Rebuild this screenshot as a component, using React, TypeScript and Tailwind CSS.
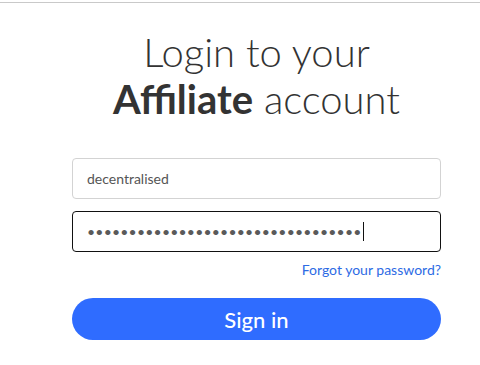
export default function App() {
  const dots = "•".repeat(33);
  return (
    <div className="min-h-[365px] w-[480px] bg-white font-['Lato','Liberation_Sans',sans-serif] pt-[2px]">
      <div className="h-px bg-[#c9c9c9]" />
      <div className="ml-[72px] w-[369px] pt-[26px]">
        {/* Heading */}
        <h1 className="text-center text-[40px] leading-[47px] font-light text-[#333333]">
          Login to your
          <br />
          <span className="font-bold">Affiliate</span> account
        </h1>

        {/* Form */}
        <div className="mt-[35px] flex flex-col">
          <div className="h-[41px] rounded-[4px] border border-[#d3d3d3] px-[14px] flex items-center text-[14px] text-[#555555]">
            decentralised
          </div>
          <div className="mt-[12px] h-[41px] rounded-[4px] border border-[#111111] px-[14px] flex items-center">
            <span className="text-[14px] text-[#5a5a5a] tracking-[0.2px]">{dots}</span>
            <span className="ml-px w-px h-[19px] bg-[#111111]" />
          </div>
          <div className="mt-[9px] flex justify-end">
            <a className="text-[14px] text-[#2d6be4] leading-[17px]">Forgot your password?</a>
          </div>
          <button className="mt-[20px] h-[42px] rounded-full bg-[#2f6cff] text-white text-[22px] font-medium">
            Sign in
          </button>
        </div>
      </div>
    </div>
  );
}
